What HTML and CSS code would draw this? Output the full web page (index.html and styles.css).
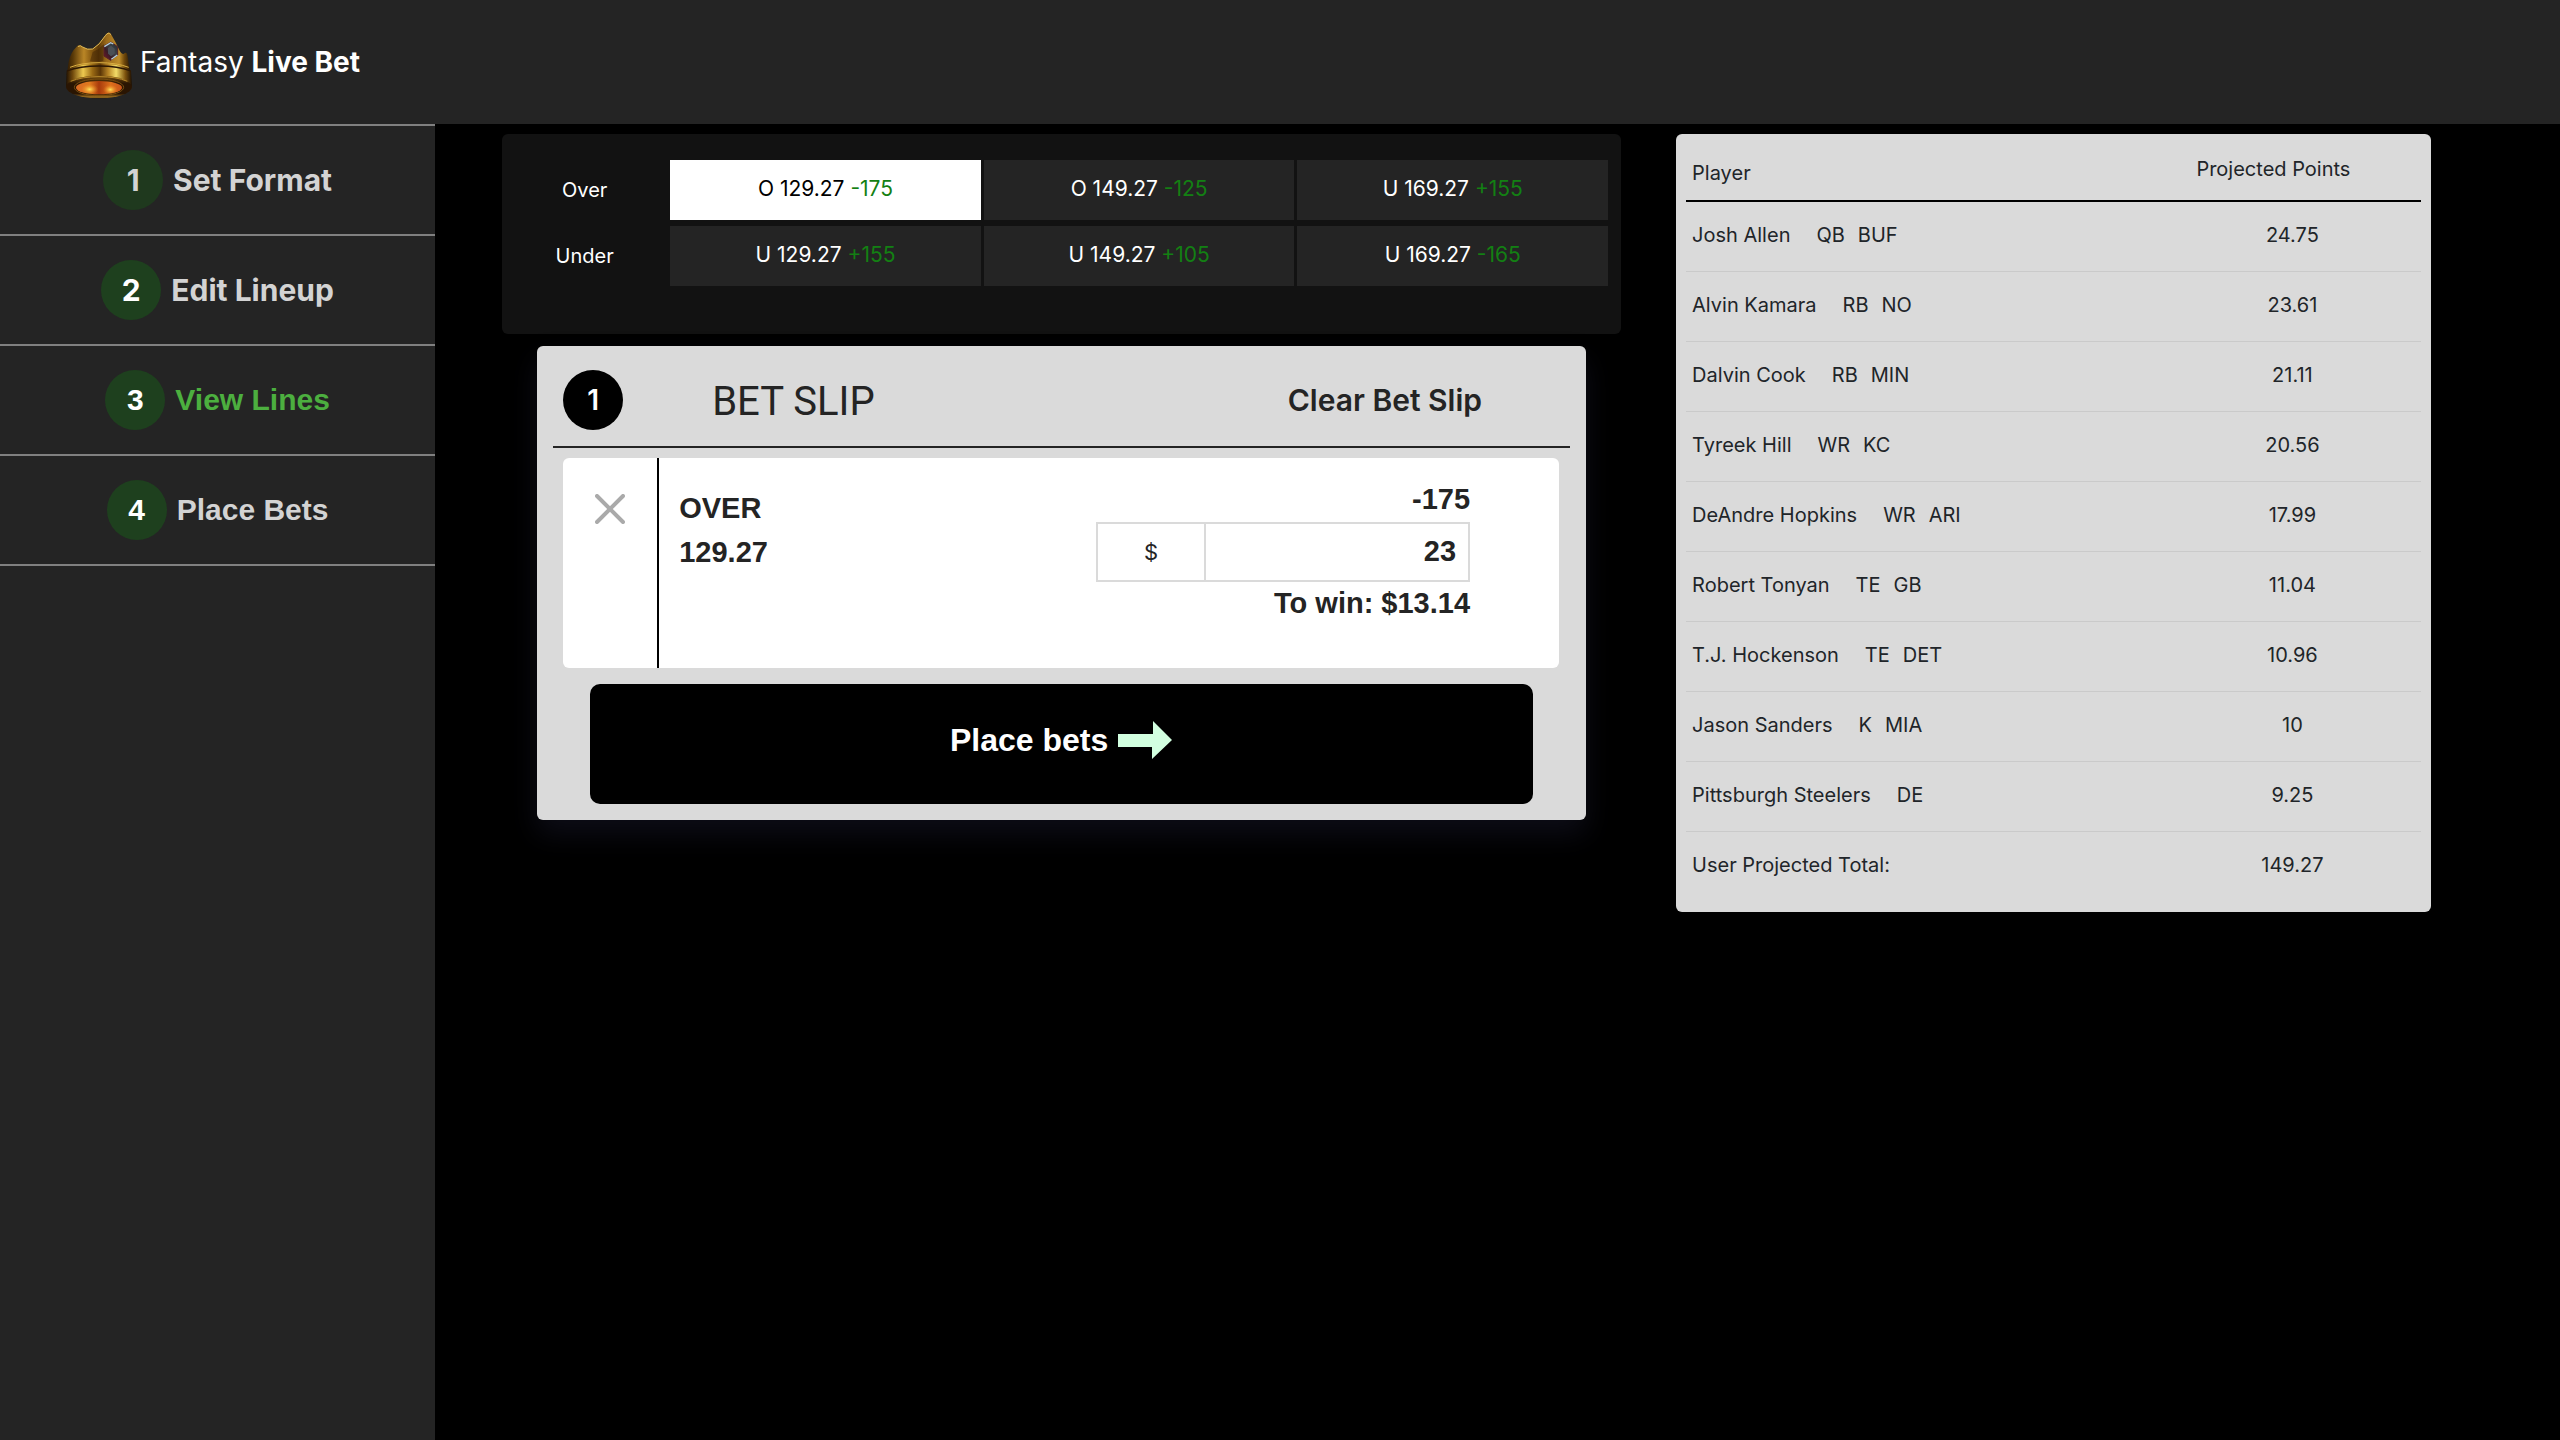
FILE: index.html
```html
<!DOCTYPE html>
<html lang="en">
<head>
<meta charset="utf-8">
<meta name="viewport" content="width=device-width, initial-scale=1">
<title>Fantasy Live Bet</title>
<link rel="stylesheet" href="styles.css">
</head>
<body>
<header class="topbar">
  <svg class="crown" viewBox="42 33 210 210" aria-hidden="true">
    <defs>
      <linearGradient id="gold" x1="0" x2="1" y1="0" y2="0">
        <stop offset="0" stop-color="#2e1a03"/><stop offset=".1" stop-color="#5a3a08"/><stop offset=".27" stop-color="#ba8626"/><stop offset=".38" stop-color="#8a5c12"/><stop offset=".5" stop-color="#5e3a08"/><stop offset=".62" stop-color="#9a6a1a"/><stop offset=".82" stop-color="#bf8e2b"/><stop offset=".9" stop-color="#70490b"/><stop offset="1" stop-color="#221202"/>
      </linearGradient>
      <linearGradient id="band" x1="0" x2="1" y1="0" y2="0">
        <stop offset="0" stop-color="#1e1002"/><stop offset=".1" stop-color="#6f480c"/><stop offset=".26" stop-color="#edc94f"/><stop offset=".4" stop-color="#9a6a14"/><stop offset=".52" stop-color="#5a3506"/><stop offset=".64" stop-color="#b88525"/><stop offset=".76" stop-color="#f3dc68"/><stop offset=".9" stop-color="#7c520d"/><stop offset="1" stop-color="#1a0d02"/>
      </linearGradient>
      <linearGradient id="rim" x1="0" x2="0" y1="0" y2="1">
        <stop offset="0" stop-color="#7a500d"/><stop offset=".35" stop-color="#2a1502"/><stop offset=".8" stop-color="#2a1502"/><stop offset=".95" stop-color="#a87822"/><stop offset="1" stop-color="#2a1502"/>
      </linearGradient>
      <radialGradient id="glow"><stop offset="0" stop-color="#ffe45c"/><stop offset="1" stop-color="#f08a20" stop-opacity="0"/></radialGradient>
      <linearGradient id="hollow" x1="0" x2="1" y1="0" y2="0">
        <stop offset="0" stop-color="#d96a24"/><stop offset=".3" stop-color="#e07a1e"/><stop offset=".5" stop-color="#a83a0c"/><stop offset=".75" stop-color="#dd701c"/><stop offset="1" stop-color="#c9541a"/>
      </linearGradient>
      <linearGradient id="gem" x1="0" x2="1" y1="1" y2="0">
        <stop offset="0" stop-color="#7a1428"/><stop offset=".35" stop-color="#3a1c26"/><stop offset=".6" stop-color="#3c4248"/><stop offset="1" stop-color="#22282c"/>
      </linearGradient>
    </defs>
    <path fill="url(#gold)" d="M80 80 Q87 72 97 80 Q112 90 128 86 Q148 74 166 46 Q176 30 184 44 Q196 64 206 86 Q213 102 221 102 Q229 94 232 104 L242 165 L50 165 L56 125 Q62 96 80 80Z"/>
    <path fill="none" stroke="#e0bb58" stroke-width="3" stroke-linecap="round" d="M85 79 Q91 74 98 81 Q112 91 128 87 Q148 76 166 47 Q175 34 182 43"/>
    <path fill="#3a2004" opacity=".45" d="M128 96 Q148 88 162 72 L160 122 Q146 126 120 124Z"/>
    <path fill="url(#band)" d="M50 152 Q90 130 147 130 Q204 130 243 152 L246 200 L48 200Z"/>
    <path fill="none" stroke="#2c1703" stroke-width="4" d="M51 153 Q90 138 147 138 Q204 138 242 153"/>
    <path fill="none" stroke="#d9ae42" stroke-width="3" d="M60 142 Q95 128 147 128 Q200 128 236 142"/>
    <ellipse fill="url(#rim)" cx="147" cy="201" rx="99" ry="34"/>
    <path fill="none" stroke="#b98a2c" stroke-width="3" d="M62 184 Q95 170 147 170 Q200 170 232 184"/>
    <ellipse fill="none" stroke="#7a4f10" stroke-width="3" cx="147" cy="202" rx="74" ry="25"/>
    <ellipse fill="url(#hollow)" cx="147" cy="203" rx="69" ry="20"/>
    <ellipse fill="url(#glow)" cx="119" cy="208" rx="26" ry="16"/>
    <ellipse fill="url(#glow)" cx="181" cy="209" rx="22" ry="15"/>
    <path fill="url(#gem)" stroke="#55202a" stroke-width="3" d="M183 66 L203 80 L203 105 L182 121 L162 108 L162 78Z"/>
    <path fill="none" stroke="#b5cfda" stroke-width="4" d="M163 80 L182 68 L190 72 M184 118 L202 105"/>
    <path fill="#4a5056" d="M174 84 L183 77 L194 86 L194 101 L183 109 L174 101Z"/>
  </svg>
  <span class="brand">Fantasy <strong>Live Bet</strong></span>
</header>
<div class="layout">
  <nav class="steps" aria-label="Steps">
    <a class="step step-done" href="#format"><span class="step-number">1</span>Set Format</a>
    <a class="step" href="#lineup"><span class="step-number">2</span>Edit Lineup</a>
    <a class="step step-alt step-current" href="#lines" aria-current="step"><span class="step-number">3</span>View Lines</a>
    <a class="step step-alt" href="#bets"><span class="step-number">4</span>Place Bets</a>
  </nav>
  <main class="content">
    <div class="betting">
      <section class="odds" aria-label="Lines">
        <span class="odds-label">Over</span>
        <button class="odd odd-selected" type="button" aria-pressed="true">O 129.27 <span class="price">-175</span></button>
        <button class="odd" type="button">O 149.27 <span class="price">-125</span></button>
        <button class="odd" type="button">U 169.27 <span class="price">+155</span></button>
        <span class="odds-label">Under</span>
        <button class="odd" type="button">U 129.27 <span class="price">+155</span></button>
        <button class="odd" type="button">U 149.27 <span class="price">+105</span></button>
        <button class="odd" type="button">U 169.27 <span class="price">-165</span></button>
      </section>
      <section class="slip">
        <header class="slip-header">
          <span class="slip-count">1</span>
          <h2 class="slip-title">BET SLIP</h2>
          <button class="slip-clear" type="button">Clear Bet Slip</button>
        </header>
        <div class="bet">
          <button class="bet-remove" type="button" aria-label="Remove bet">
            <svg class="cross" viewBox="0 0 30 30" aria-hidden="true"><path d="M2 2 L28 28 M28 2 L2 28"/></svg>
          </button>
          <div class="bet-line"><div>OVER</div><div>129.27</div></div>
          <div class="bet-stake">
            <div class="bet-text">-175</div>
            <div class="stake">
              <label class="stake-currency" for="stake" aria-label="Stake in dollars">$</label>
              <input class="stake-input" id="stake" type="text" inputmode="decimal" value="23">
            </div>
            <div class="bet-text">To win: $13.14</div>
          </div>
        </div>
        <button class="place" type="button">Place bets
          <svg class="arrow" viewBox="0 0 56 40" aria-hidden="true"><path d="M1 14 H36 V1 L55 20 L35 39 V27 H1Z"/></svg>
        </button>
      </section>
    </div>
    <div class="lineup">
      <table class="players">
        <thead><tr><th class="player-head" scope="col">Player</th><th class="points-head" scope="col">Projected Points</th></tr></thead>
        <tbody>
          <tr><td>Josh Allen<span class="position">QB</span><span class="team">BUF</span></td><td class="points">24.75</td></tr>
          <tr><td>Alvin Kamara<span class="position">RB</span><span class="team">NO</span></td><td class="points">23.61</td></tr>
          <tr><td>Dalvin Cook<span class="position">RB</span><span class="team">MIN</span></td><td class="points">21.11</td></tr>
          <tr><td>Tyreek Hill<span class="position">WR</span><span class="team">KC</span></td><td class="points">20.56</td></tr>
          <tr><td>DeAndre Hopkins<span class="position">WR</span><span class="team">ARI</span></td><td class="points">17.99</td></tr>
          <tr><td>Robert Tonyan<span class="position">TE</span><span class="team">GB</span></td><td class="points">11.04</td></tr>
          <tr><td>T.J. Hockenson<span class="position">TE</span><span class="team">DET</span></td><td class="points">10.96</td></tr>
          <tr><td>Jason Sanders<span class="position">K</span><span class="team">MIA</span></td><td class="points">10</td></tr>
          <tr><td>Pittsburgh Steelers<span class="position">DE</span></td><td class="points">9.25</td></tr>
          <tr><td>User Projected Total:</td><td class="points">149.27</td></tr>
        </tbody>
      </table>
    </div>
  </main>
</div>
</body>
</html>
```
FILE: styles.css
```css
* { box-sizing: border-box; }

body {
  margin: 0;
  min-height: 100vh;
  display: flex;
  flex-direction: column;
  background: #000;
  color: #242424;
  font: 20px/30px Inter, sans-serif;
}

button {
  border: 0;
  padding: 0;
  background: none;
  color: inherit;
  font: inherit;
  cursor: pointer;
}

.topbar {
  display: flex;
  align-items: center;
  gap: 6px;
  min-height: 124px;
  padding: 0 64px;
  background: #242424;
  color: #fff;
}

.crown {
  width: 70px;
  height: 70px;
  margin-top: 8px;
}

.brand { font-size: 28px; }
.brand strong { font-weight: 700; }

.layout {
  flex: 1;
  display: flex;
}

.steps {
  flex: 0 0 17%;
  border-top: 2px solid #808080;
  background: #242424;
}

.step {
  display: flex;
  align-items: center;
  justify-content: center;
  gap: 10px;
  min-height: 110px;
  border-bottom: 2px solid #808080;
  color: #d3d3d3;
  font-size: 30px;
  font-weight: 700;
  text-decoration: none;
}

.step-alt { font-family: "Liberation Sans", Arial, sans-serif; }
.step-current { color: #4caf3f; }

.step-number {
  width: 60px;
  border-radius: 50%;
  background: #1e401e;
  color: #fff;
  line-height: 60px;
  text-align: center;
}

.step-done .step-number {
  background: #1f391e;
  color: #d3d3d3;
}

.content {
  flex: 1;
  display: grid;
  grid-template-columns: 1119fr 755fr;
  align-items: start;
  gap: 55px;
  padding: 10px 129px 40px 67px;
}

.odds {
  display: grid;
  grid-template-columns: 165px repeat(3, 1fr);
  gap: 6px 3px;
  padding: 26px 13px 48px 0;
  border-radius: 6px;
  background: #121212;
  color: #fff;
}

.odds-label {
  line-height: 60px;
  text-align: center;
}

.odd {
  height: 60px;
  padding-bottom: 2px;
  background: #242424;
  font-size: 21px;
}

.odd-selected {
  background: #fff;
  color: #000;
}

.price { color: #138013; }

.slip {
  margin: 12px 35px 0;
  padding: 0 16px 16px;
  border-radius: 6px;
  background: #dadada;
  box-shadow: 0 14px 28px rgba(50, 50, 93, .25);
}

.slip-header {
  display: flex;
  align-items: center;
  height: 102px;
  padding: 8px 88px 0 10px;
  border-bottom: 2px solid #242424;
}

.slip-count {
  width: 60px;
  border-radius: 50%;
  background: #000;
  color: #fff;
  font-size: 28px;
  font-weight: 600;
  line-height: 60px;
  text-align: center;
}

.slip-title {
  flex: 1;
  margin: 4px 0 0 89px;
  font: 400 40px/60px Roboto, sans-serif;
}

.slip-clear {
  font-size: 30px;
  font-weight: 600;
}

.bet {
  display: flex;
  min-height: 210px;
  margin: 10px 11px 16px 10px;
  border-radius: 6px;
  background: #fff;
  font: 700 29px/44px "Liberation Sans", Arial, sans-serif;
}

.bet-remove {
  flex: 0 0 96px;
  display: flex;
  justify-content: center;
  padding-top: 36px;
  border-right: 2px solid #000;
}

.cross {
  width: 30px;
  height: 30px;
  fill: none;
  stroke: #aaa;
  stroke-width: 4;
  stroke-linecap: round;
}

.bet-line {
  flex: 1;
  padding: 28px 20px;
}

.bet-stake {
  flex: 0 0 463px;
  min-width: 0;
  padding: 20px 89px 0 0;
  text-align: right;
}

.stake {
  display: flex;
  height: 60px;
  border: 2px solid #dadada;
}

.stake-currency {
  flex: 0 0 108px;
  border-right: 2px solid #dadada;
  font: 400 22px/56px Inter, sans-serif;
  text-align: center;
}

.stake-input {
  flex: 1;
  width: 0;
  min-width: 0;
  border: 0;
  padding: 0 12px 2px;
  background: none;
  color: inherit;
  font: inherit;
  text-align: right;
}

.bet-text { line-height: 42px; }
.bet-text:first-child { padding-bottom: 2px; }

.place {
  display: flex;
  align-items: center;
  justify-content: center;
  gap: 9px;
  width: calc(100% - 74px);
  height: 120px;
  margin: 0 37px;
  padding-bottom: 8px;
  border-radius: 10px;
  background: #000;
  color: #fff;
  font: 700 32px/48px "Liberation Sans", Arial, sans-serif;
}

.arrow {
  width: 56px;
  height: 40px;
  fill: #d2ffe0;
}

.lineup {
  padding: 10px;
  border-radius: 6px;
  background: #dadada;
}

.players {
  width: 100%;
  border-collapse: separate;
  border-spacing: 0;
  color: #212529;
}

.players th {
  height: 58px;
  padding: 2px 6px 0;
  border-bottom: 2px solid #000;
  font-weight: 400;
  text-align: left;
}

.players .points-head {
  width: 35%;
  padding: 0 38px 6px 0;
  text-align: center;
}

.players td {
  height: 70px;
  padding: 0 6px 4px;
  border-bottom: 1px solid #cacaca;
}

.players tr:last-child td { border-bottom: 0; }
.players .points { text-align: center; }

.position { margin-left: 26px; }
.team { margin-left: 13px; }
```
